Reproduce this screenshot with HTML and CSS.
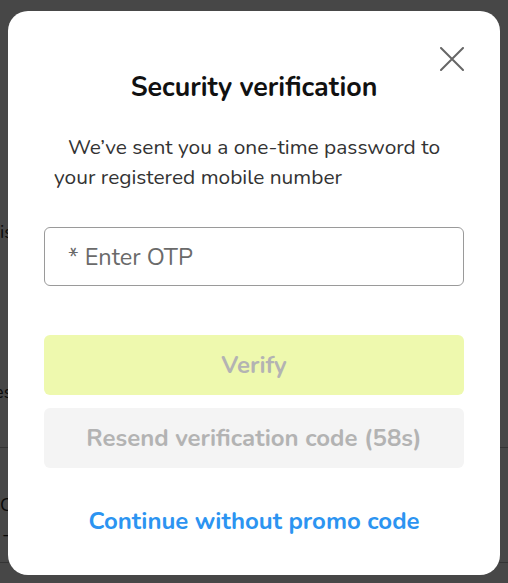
FILE: index.html
```html
<!DOCTYPE html>
<html lang="en">
<head>
<meta charset="utf-8">
<title>Security verification</title>
<link rel="stylesheet" href="styles.css">
</head>
<body>
  <div class="page">
    <div class="page-row page-row--a">Register first</div>
    <div class="page-row page-row--b">rates</div>
    <div class="page-rule page-rule--a"></div>
    <div class="page-row page-row--c">Cost</div>
    <div class="page-row page-row--d">-</div>
    <div class="page-rule page-rule--b"></div>
  </div>
  <div class="overlay">
    <div class="modal" role="dialog" aria-labelledby="title">
      <button class="close" type="button" aria-label="Close">
        <svg width="24" height="24" viewBox="0 0 24 24" fill="none" stroke="#666" stroke-width="2" stroke-linecap="round">
          <path d="M1 1 L23 23 M23 1 L1 23"/>
        </svg>
      </button>
      <h2 class="title" id="title">Security verification</h2>
      <p class="desc">We’ve sent you a one-time password to your registered mobile number</p>
      <input class="otp" type="text" placeholder="* Enter OTP">
      <div class="actions">
        <button class="btn btn--verify" type="button">Verify</button>
        <button class="btn btn--resend" type="button">Resend verification code (58s)</button>
      </div>
      <a class="link" href="#">Continue without promo code</a>
    </div>
  </div>
</body>
</html>
```
FILE: styles.css
```css
html, body {
  margin: 0;
  padding: 0;
}
body {
  width: 508px;
  height: 583px;
  overflow: hidden;
  background: #fff;
  font-family: "Nunito", "Lato", "Noto Sans", sans-serif;
}
.page {
  display: flex;
  flex-direction: column;
  color: #222;
  font-size: 18px;
}
.page-row {
  line-height: 24px;
  padding-left: 2px;
  white-space: nowrap;
}
.page-row--a { margin-top: 220px; margin-left: -34px; }
.page-row--b { margin-top: 136px; margin-left: -30px; }
.page-rule {
  height: 1px;
  background: #bbb;
}
.page-rule--a { margin-top: 43px; }
.page-rule--b { margin-top: 16px; }
.page-row--c { margin-top: 45px; margin-left: -2px; }
.page-row--d { margin-top: 5px; margin-left: 0; }

.overlay {
  position: fixed;
  inset: 0;
  background: rgba(0, 0, 0, 0.72);
  display: flex;
  justify-content: center;
  padding-top: 11px;
  box-sizing: border-box;
}
.modal {
  position: relative;
  width: 492px;
  height: 564px;
  box-sizing: border-box;
  background: #fff;
  border-radius: 20px;
  padding: 61px 36px 0;
  display: flex;
  flex-direction: column;
}
.close {
  position: absolute;
  top: 36px;
  right: 36px;
  width: 24px;
  height: 24px;
  padding: 0;
  border: 0;
  background: none;
  cursor: pointer;
}
.close svg { display: block; }
.title {
  margin: 0;
  text-align: center;
  font-size: 26.8px;
  line-height: 30px;
  font-weight: 700;
  color: #111;
}
.desc {
  margin: 30px 0 0;
  padding: 0 10px;
  text-indent: 14px;
  font-size: 20.9px;
  line-height: 30px;
  color: #333;
}
.otp {
  margin-top: 35px;
  height: 59px;
  box-sizing: border-box;
  border: 1px solid #9a9a9a;
  border-radius: 6px;
  padding: 0 23px;
  font-family: inherit;
  font-size: 23.5px;
  color: #333;
  outline: none;
}
.otp::placeholder { color: #6a6a6a; }
.actions {
  margin-top: 49px;
  display: flex;
  flex-direction: column;
  gap: 13px;
}
.btn {
  height: 60px;
  border: 0;
  border-radius: 6px;
  font-family: inherit;
  font-size: 24px;
  font-weight: 700;
  color: #b3b3b3;
  cursor: default;
}
.btn--verify { background: #eef9ae; }
.btn--resend { background: #f4f4f4; }
.link {
  margin-top: 38px;
  text-align: center;
  font-size: 24px;
  line-height: 30px;
  font-weight: 700;
  color: #2c94f1;
  text-decoration: none;
}
```
